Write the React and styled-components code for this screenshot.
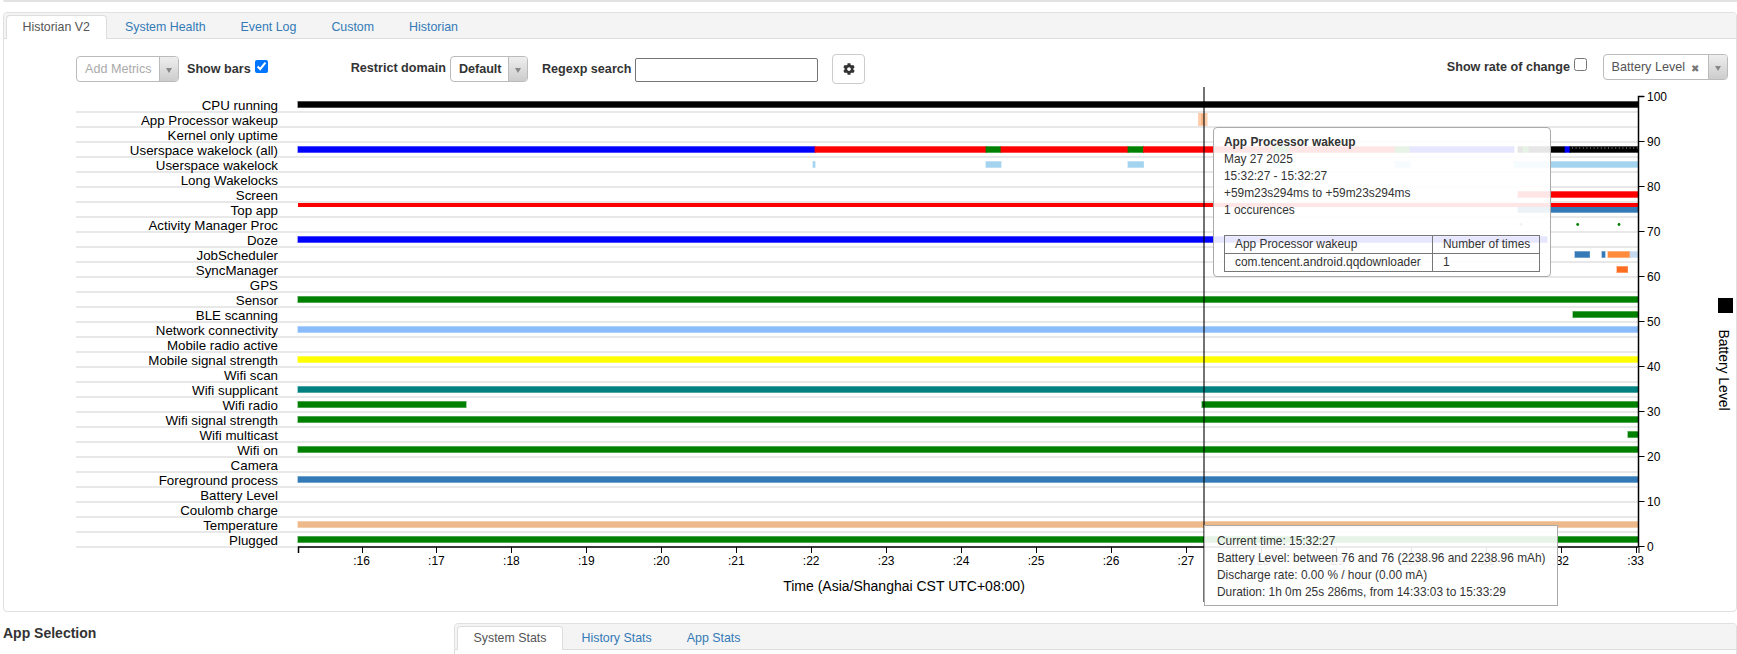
import React from "react";
import styled, { createGlobalStyle } from "styled-components";
import { FaCog } from "react-icons/fa";

const Global = createGlobalStyle`
  html, body { margin: 0; padding: 0; background: #fff; }
  body { width: 1737px; height: 654px; overflow: hidden; font-family: "Liberation Sans", Arial, sans-serif; font-size: 13px; color: #333; }
`;

const Page = styled.div`display: flex; flex-direction: column; height: 654px; overflow: hidden;`;
const TopStrip = styled.div`
  height: 2px; margin: 0 0 10px 3px; background: #e2e2e2; border-bottom-left-radius: 3px; flex: none;
`;
const Panel = styled.section`
  flex: none; margin-left: ${p => p.$left || 0}px; box-sizing: border-box;
  width: ${p => p.$width}px; height: ${p => p.$height}px;
  border: 1px solid #e0e0e0; border-radius: 4px; background: #fff;
`;
const TabBar = styled.nav`
  display: flex; gap: 2px; height: 26px; box-sizing: border-box; padding: 2px 0 0 2px;
  background: #f4f4f4; border-bottom: 1px solid #ddd; border-radius: 3px 3px 0 0;
`;
const Tab = styled.span`
  height: 24px; box-sizing: border-box; padding: 0 15.5px; line-height: 22px; font-size: 12.4px;
  border: 1px solid ${p => (p.$active ? "#ddd" : "transparent")};
  border-bottom: 0; border-radius: 4px 4px 0 0;
  background: ${p => (p.$active ? "#fff" : "transparent")};
  color: ${p => (p.$active ? "#555" : "#337ab7")};
`;
const Toolbar = styled.div`display: flex; align-items: flex-start; height: 48px; padding: 0 8px 0 72px;`;
const Spacer = styled.div`flex: 1;`;
const FieldLabel = styled.label`
  font-weight: 700; font-size: 12.6px; line-height: 20px; color: #333; white-space: nowrap;
  margin: ${p => p.$top}px 0 0 ${p => p.$left || 0}px;
`;
const Check = styled.input.attrs({ type: "checkbox" })`
  width: 13px; height: 13px; flex: none; margin: ${p => p.$top}px 0 0 ${p => p.$left || 0}px;
`;
const Select = styled.div`
  display: flex; box-sizing: border-box; flex: none; width: ${p => p.$width}px; height: 26px;
  margin: ${p => p.$top}px 0 0 ${p => p.$left || 0}px;
  border: 1px solid #bbb; border-radius: 4px; background: #fff; overflow: hidden;
`;
const SelectValue = styled.span`
  flex: 1; padding-left: 8px; line-height: 25px; font-size: 12.6px; white-space: nowrap;
  color: ${p => (p.$bold ? "#333" : p.$muted ? "#aaa" : "#555")}; font-weight: ${p => (p.$bold ? 700 : 400)};
`;
const Clear = styled.span`
  width: 24px; box-sizing: border-box; padding-left: 6px; line-height: 27px; font-size: 10px; color: #777;
`;
const Caret = styled.span`
  flex: none; width: 18px; display: flex; align-items: center; justify-content: center;
  border-left: 1px solid #bbb; background: linear-gradient(#eee, #ccc);
  &::after { content: ""; margin-top: 3px; border-top: 5px solid #888; border-left: 3px solid transparent; border-right: 3px solid transparent; }
`;
const SearchInput = styled.input`
  box-sizing: border-box; width: 183px; height: 24px; margin: 19px 0 0 4px;
  border: 1px solid #767676; border-radius: 2px; background: #fff; padding: 1px 2px;
`;
const GearButton = styled.button`
  box-sizing: border-box; width: 33px; height: 30px; margin: 15px 0 0 14px; padding: 0;
  display: flex; align-items: center; justify-content: center;
  background: #fff; border: 1px solid #ccc; border-radius: 4px; color: #333; font-size: 12px;
`;
const ChartWrap = styled.div`position: relative; height: 524px;`;
const ChartSvg = styled.svg`display: block; font-family: "Liberation Sans", Arial, sans-serif;`;
const Tip = styled.div`
  position: absolute; box-sizing: border-box; background: rgba(255,255,255,.9);
  font-size: 11.9px; line-height: 17px; color: #333; white-space: nowrap;
`;
const WakeTip = styled(Tip)`
  left: 1209px; top: 40px; width: 338px; height: 150px; padding: 0 10px;
  border: 1px solid #aaa; border-radius: 4px;
`;
const WakeTitle = styled.div`font-weight: 700; margin-top: 6px;`;
const WakeTable = styled.table`
  border-collapse: collapse; margin-top: 16px; width: 316px; table-layout: fixed;
  td { border: 1px solid #777; height: 17px; padding: 0 10px; line-height: 17px; white-space: nowrap; box-sizing: border-box; }
`;
const CursorTip = styled(Tip)`
  left: 1200px; top: 438px; width: 354px; height: 81px; padding: 7px 12px; border: 1px solid #aaa;
`;
const BottomRow = styled.div`display: flex; margin-top: 11px; flex: none;`;
const Sidebar = styled.aside`width: 454px; flex: none; padding-left: 3px; box-sizing: border-box;`;
const SideTitle = styled.h4`margin: 0 0 6px; font-size: 14px; line-height: 20px; font-weight: 700; color: #333;`;
const SideText = styled.div`font-size: 13px; line-height: 20px; color: #333;`;

const labels = ["CPU running","App Processor wakeup","Kernel only uptime","Userspace wakelock (all)","Userspace wakelock","Long Wakelocks","Screen","Top app","Activity Manager Proc","Doze","JobScheduler","SyncManager","GPS","Sensor","BLE scanning","Network connectivity","Mobile radio active","Mobile signal strength","Wifi scan","Wifi supplicant","Wifi radio","Wifi signal strength","Wifi multicast","Wifi on","Camera","Foreground process","Battery Level","Coulomb charge","Temperature","Plugged"];

const L = 298, R = 1638;
const G = "#008000", B = "#0000ff", RD = "#ff0000", SB = "#337ab7", LB = "#a3d3ee";
const bars = [
  [0,L,R,"#000"],
  [3,L,815,B],[3,815,986,RD],[3,986,1001,G],[3,1001,1128,RD],[3,1128,1143.5,G],[3,1143.5,1274,RD],[3,1274,1289,G],[3,1289,1395,RD],[3,1395,1410,G],[3,1410,1514,B],
  [3,1518,1523,"#000"],[3,1523,1529,G],[3,1529,1565,"#000"],[3,1565,1570,B],[3,1570,R,"#000"],
  [4,813,815,LB],[4,986,1001,LB],[4,1128,1143.5,LB],[4,1274,1289,LB],[4,1395,1410,LB],[4,1514,R,LB],
  [6,1518,R,RD],
  [7,1518,R,SB],
  [9,L,1547,B],
  [10,1575,1589.5,SB],[10,1602,1605,SB],[10,1608,1630,"#ff8c3c"],[10,1630,R,"#c5daee"],
  [11,1617,1627.5,"#ff6d20"],
  [13,L,R,G],[14,1573,R,G],[15,L,R,"#8abcfb"],[17,L,R,"#ffff00"],[19,L,R,"#008080"],
  [20,L,466,G],[20,1202,R,G],[21,L,R,G],[22,1628,R,G],[23,L,R,G],[25,L,R,SB],[28,L,R,"#eeb98a"],[29,L,R,G],
];
const rowY = i => 102 + i * 15;
const xTicks = Array.from({ length: 18 }, (_, i) => ({ x: 361.5 + i * 74.95, t: `:${16 + i}` }));
const yTicks = Array.from({ length: 11 }, (_, i) => ({ y: 546.5 - i * 45, t: String(i * 10) }));
const blackTicks = Array.from({ length: 19 }, (_, i) => 1572 + i * 3.6);

function Chart() {
  return (
    <ChartSvg width="1733" height="524" viewBox="4 87 1733 524">
      {labels.map((_, i) => <rect key={i} x="76" y={111 + i * 15} width={R - 76} height="2" fill="#e8e8e8" />)}
      <rect x="1198" y="113" width="9.5" height="13" fill="#ff8c3c" opacity=".42" />
      <rect x="1201" y="114" width="3" height="11" fill="#e87722" opacity=".3" />
      {bars.map(([r, a, b, c], i) => (
        <g key={i}>
          <rect x={a - 0.5} y={rowY(r) - 1} width={b - a + 1} height="7" fill={c} opacity=".7" />
          <rect x={a} y={rowY(r)} width={b - a} height="5" fill={c} />
        </g>
      ))}
      <rect x={L} y="203" width={R - L} height="4" fill={RD} />
      {blackTicks.map(x => <rect key={x} x={x} y="147" width="1" height="2" fill="#555" />)}
      {[1521, 1577.7, 1619].map((x, i) => <circle key={x} cx={x} cy="224.5" r="1.4" fill={G} opacity={i ? 1 : .7} />)}
      {labels.map((t, i) => <text key={t} x="278" y={110 + i * 15} textAnchor="end" fontSize="13.33" fill="#000">{t}</text>)}
      <path d="M298.5 553V547H1638.5" fill="none" stroke="#000" strokeWidth="1.5" />
      <path d="M1644 96.5H1638.5V547" fill="none" stroke="#000" strokeWidth="1.5" />
      <path d="M1639 547v6" stroke="#000" />
      {xTicks.map(({ x, t }) => (
        <g key={t}>
          <path d={`M${Math.round(x) + .5} 547v6`} stroke="#000" />
          <text x={x} y="565" textAnchor="middle" fontSize="12" fill="#000">{t}</text>
        </g>
      ))}
      {yTicks.map(({ y, t }) => (
        <g key={t}>
          <path d={`M1638.5 ${y}h6`} stroke="#000" />
          <text x="1647" y={y + 4.5} fontSize="12" fill="#000">{t}</text>
        </g>
      ))}
      <text x="904" y="591" textAnchor="middle" fontSize="14" fill="#000">Time (Asia/Shanghai CST UTC+08:00)</text>
      <rect x="1718" y="298" width="15" height="15" fill="#000" />
      <text transform="translate(1718.5 329.5) rotate(90)" fontSize="13.9" fill="#000">Battery Level</text>
      <rect x="1203" y="87" width="2" height="515" fill="#000" opacity=".55" />
    </ChartSvg>
  );
}

export default function App() {
  return (
    <Page>
      <Global />
      <TopStrip />
      <Panel $left={3} $height={600}>
        <TabBar>
          <Tab $active>Historian V2</Tab>
          <Tab>System Health</Tab>
          <Tab>Event Log</Tab>
          <Tab>Custom</Tab>
          <Tab>Historian</Tab>
        </TabBar>
        <Toolbar>
          <Select $width={103} $top={17}><SelectValue $muted>Add Metrics</SelectValue><Caret /></Select>
          <FieldLabel $top={20} $left={8}>Show bars</FieldLabel>
          <Check $top={21} $left={4} defaultChecked />
          <FieldLabel $top={19} $left={83}>Restrict domain</FieldLabel>
          <Select $width={78} $top={17} $left={4}><SelectValue $bold>Default</SelectValue><Caret /></Select>
          <FieldLabel $top={20} $left={14}>Regexp search</FieldLabel>
          <SearchInput />
          <GearButton aria-label="Settings"><FaCog /></GearButton>
          <Spacer />
          <FieldLabel $top={18}>Show rate of change</FieldLabel>
          <Check $top={19} $left={4} />
          <Select $width={125.5} $top={15} $left={15.5}><SelectValue>Battery Level</SelectValue><Clear>✖</Clear><Caret /></Select>
        </Toolbar>
        <ChartWrap>
          <Chart />
          <WakeTip>
            <WakeTitle>App Processor wakeup</WakeTitle>
            <div>May 27 2025</div>
            <div>15:32:27 - 15:32:27</div>
            <div>+59m23s294ms to +59m23s294ms</div>
            <div>1 occurences</div>
            <WakeTable>
              <colgroup><col style={{ width: 208 }} /><col /></colgroup>
              <tbody>
                <tr><td>App Processor wakeup</td><td>Number of times</td></tr>
                <tr><td>com.tencent.android.qqdownloader</td><td>1</td></tr>
              </tbody>
            </WakeTable>
          </WakeTip>
          <CursorTip>
            <div>Current time: 15:32:27</div>
            <div>Battery Level: between 76 and 76 (2238.96 and 2238.96 mAh)</div>
            <div>Discharge rate: 0.00 % / hour (0.00 mA)</div>
            <div>Duration: 1h 0m 25s 286ms, from 14:33:03 to 15:33:29</div>
          </CursorTip>
        </ChartWrap>
      </Panel>
      <BottomRow>
        <Sidebar>
          <SideTitle>App Selection</SideTitle>
          <SideText>System wakeups</SideText>
        </Sidebar>
        <Panel $width={1283} $height={60}>
          <TabBar>
            <Tab $active>System Stats</Tab>
            <Tab>History Stats</Tab>
            <Tab>App Stats</Tab>
          </TabBar>
        </Panel>
      </BottomRow>
    </Page>
  );
}
